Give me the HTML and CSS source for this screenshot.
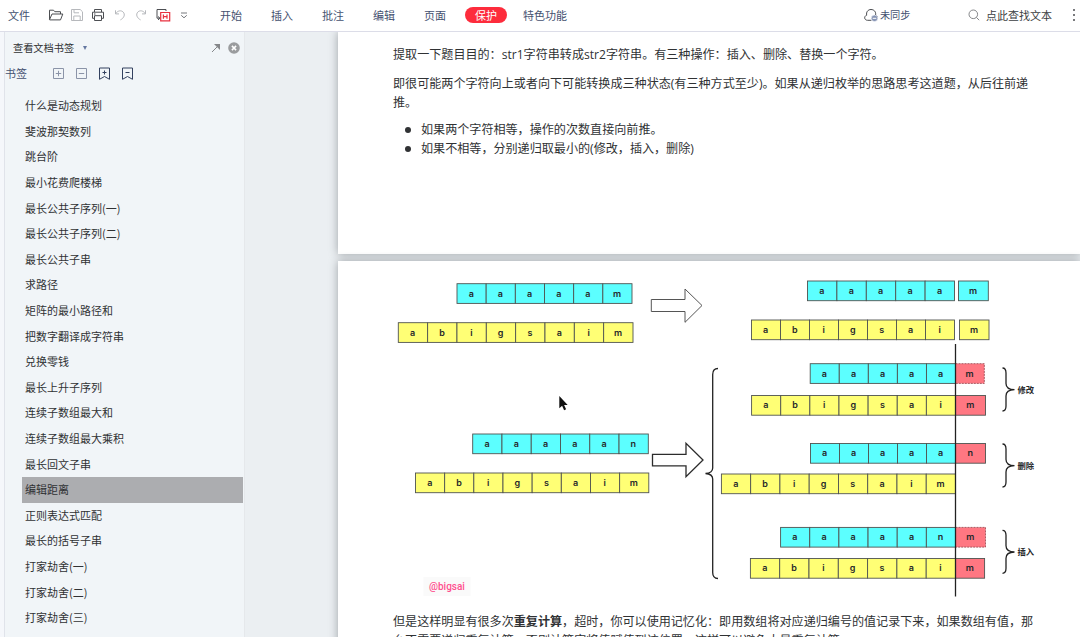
FILE: index.html
```html
<!DOCTYPE html>
<html lang="zh-CN">
<head>
    <meta charset="UTF-8">
    <meta name="viewport" content="width=device-width, initial-scale=1.0">
    <title>编辑距离</title>
    <link rel="stylesheet" href="styles.css">
</head>
<body>
    <header class="topbar">
        <span class="file-menu">文件</span>
        <div class="tools">
            <svg width="16" height="14" viewBox="0 0 16 14"><path d="M1.5 11.5V2.2h4l1.3 1.5h5.7V6M1.5 11.7 4 6h10.8l-2.3 5.9H1.7z"/></svg>
            <svg class="off" width="14" height="14" viewBox="0 0 14 14"><path d="M1.5 1.5h8.7l2.3 2.3v8.7h-11zM4 1.8v3h5M3.8 12.3V8h6.4v4.3"/></svg>
            <svg width="14" height="14" viewBox="0 0 14 14"><path d="M3.5 4V1.5h7V4M3.5 10.3h-2V4.2h11v6.1h-2M3.5 7.7h7v4.8h-7zM3 6h1.5"/></svg>
            <svg class="off" width="14" height="14" viewBox="0 0 14 14"><path d="M2.5 2.3v3.6H6M2.7 5.7C4.5 2.6 8 2 10 3.9c2.6 2.5 1 6.2-2.6 8"/></svg>
            <svg class="off" width="14" height="14" viewBox="0 0 14 14"><path d="M11.5 2.3v3.6H8M11.3 5.7C9.5 2.6 6 2 4 3.9c-2.6 2.5-1 6.2 2.6 8"/></svg>
            <svg width="16" height="14" viewBox="0 0 16 14"><path d="M11 3V1.5H2v8.7h2.5"/><path d="m3 8.5 2 1.7-2 1.7"/><path class="red" d="M5.7 4.5h9v8.3h-9zM8.4 6.5v4.2M12 6.5v4.2M8.4 8.6H12"/></svg>
            <svg class="more-tools" width="10" height="10" viewBox="0 0 10 10"><path d="M2 3h6M2.2 5.3 5 7.8l2.8-2.5"/></svg>
        </div>
        <nav class="tabs">
            <a>开始</a>
            <a>插入</a>
            <a>批注</a>
            <a>编辑</a>
            <a>页面</a>
            <a class="active"><span>保护</span></a>
            <a class="wide">特色功能</a>
        </nav>
        <div class="sync">
            <svg width="16" height="16" viewBox="0 0 16 16"><path d="M8.5 13.3H4.6C1 13.3.8 9 3.7 8.2 3 5 5 2.500 8 2.500s5.200 2.300 4.600 5.500c1.500.6 2 1.800 1.800 2.600"/><circle class="badge" cx="11.5" cy="11.3" r="3.3"/><path class="minus" d="M9.7 11.3h3.6"/></svg>
            <span>未同步</span>
        </div>
        <div class="search">
            <svg width="12" height="12" viewBox="0 0 12 12"><circle cx="5.3" cy="5.3" r="4.3"/><path d="m8.4 8.4 2.8 2.8"/></svg>
            <span>点此查找文本</span>
        </div>
        <svg class="more" width="4" height="14" viewBox="0 0 4 14"><circle cx="2" cy="2" r="1"/><circle cx="2" cy="7" r="1"/><circle cx="2" cy="12" r="1"/></svg>
    </header>

    <div class="main">
        <aside class="sidebar">
            <div class="panel-title">
                <span>查看文档书签</span>
                <i class="caret"></i>
                <svg class="popout" width="10" height="10" viewBox="0 0 10 10"><path d="M1 9 7.5 2.5"/><path class="head" d="M3 1h6v6z"/></svg>
                <svg class="close" width="12" height="12" viewBox="0 0 12 12"><circle cx="6" cy="6" r="5.8"/><path d="m3.9 3.9 4.2 4.2M8.1 3.9 3.9 8.1"/></svg>
            </div>
            <div class="panel-tools">
                <span>书签</span>
                <svg class="light" width="13" height="13" viewBox="0 0 13 13"><path d="M1.5 1.5h10v10h-10zM6.5 3.8v5.4M3.8 6.5h5.4"/></svg>
                <svg class="light" width="13" height="13" viewBox="0 0 13 13"><path d="M1.5 1.5h10v10h-10zM3.8 6.5h5.4"/></svg>
                <svg width="13" height="13" viewBox="0 0 13 13"><path d="M1.5 1h10v11.3L6.5 9.5l-5 2.8zM6.5 3.5v4M4.5 5.5h4"/></svg>
                <svg width="13" height="13" viewBox="0 0 13 13"><path d="M1.5 1h10v11.3L6.5 9.5l-5 2.8zM4.5 5.5h4"/></svg>
            </div>
            <ul class="bookmarks">
                <li>什么是动态规划</li>
                <li>斐波那契数列</li>
                <li>跳台阶</li>
                <li>最小花费爬楼梯</li>
                <li>最长公共子序列(一)</li>
                <li>最长公共子序列(二)</li>
                <li>最长公共子串</li>
                <li>求路径</li>
                <li>矩阵的最小路径和</li>
                <li>把数字翻译成字符串</li>
                <li>兑换零钱</li>
                <li>最长上升子序列</li>
                <li>连续子数组最大和</li>
                <li>连续子数组最大乘积</li>
                <li>最长回文子串</li>
                <li class="selected">编辑距离</li>
                <li>正则表达式匹配</li>
                <li>最长的括号子串</li>
                <li>打家劫舍(一)</li>
                <li>打家劫舍(二)</li>
                <li>打家劫舍(三)</li>
            </ul>
        </aside>

        <main class="viewer">
            <section class="page first">
                <p>提取一下题目目的：str1字符串转成str2字符串。有三种操作：插入、删除、替换一个字符。</p>
                <p>即很可能两个字符向上或者向下可能转换成三种状态(有三种方式至少)。如果从递归枚举的思路思考这道题，从后往前递<br>推。</p>
                <ul>
                    <li>如果两个字符相等，操作的次数直接向前推。</li>
                    <li>如果不相等，分别递归取最小的(修改，插入，删除)</li>
                </ul>
            </section>
            <section class="page second">
                <svg class="diagram" width="742" height="344" viewBox="338 261 742 344">
                    <g id="rows"></g>
                    <path class="arrow thin" d="M651.3 299.5H685V289l17 16.5-17 16.8v-10.8h-33.7z"/>
                    <path class="arrow" d="M652.5 454.3H686v-11l17 16.7-17 16.8v-11h-33.5z"/>
                    <path class="line" d="M955.5 344v252.5"/>
                    <path class="line" d="M718 368.5q-5.3 0-5.3 6V468q0 5-7.2 5.5 7.2.5 7.2 5.5v93.5q0 6 5.3 6"/>
                    <path class="line" d="M1002.5 368q3.5 0 3.5 5v10.5q0 6 8.5 6.2-8.5.2-8.5 6.2V406q0 5-3.5 5"/>
                    <path class="line" d="M1002.5 444q3.5 0 3.5 5v10.5q0 6 8.5 6.2-8.5.2-8.5 6.2V482q0 5-3.5 5"/>
                    <path class="line" d="M1002.5 530.3q3.5 0 3.5 5v10.5q0 6 8.5 6.2-8.5.2-8.5 6.2v10.1q0 5-3.5 5"/>
                    <text class="op" x="1017.5" y="393">修改</text>
                    <text class="op" x="1017.5" y="469">删除</text>
                    <text class="op" x="1017.5" y="555">插入</text>
                    <rect class="sign-bg" x="423.5" y="577" width="47" height="19"/>
                    <text class="sign" x="429" y="590.3">@bigsai</text>
                    <path class="cursor" d="M559.3 396v12.3l2.8-2.6 2 4.5 2-.9-2-4.4h3.6z"/>
                </svg>
                <p>但是这样明显有很多次<b>重复计算</b>，超时，你可以使用记忆化：即用数组将对应递归编号的值记录下来，如果数组有值，那<br>么不需要递归重复计算，否则计算完将值赋值到该位置，这样可以避免大量重复计算。</p>
            </section>
        </main>
    </div>

    <script src="diagram.js"></script>
</body>
</html>
```
FILE: styles.css
```css
* {
    box-sizing: border-box;
}
body {
    margin: 0;
    width: 1080px;
    height: 637px;
    overflow: hidden;
    font-family: "Open Sans", "Noto Sans CJK SC", sans-serif;
    font-size: 11px;
    color: #303234;
    background: #ebeff2;
    display: flex;
    flex-direction: column;
}
svg {
    display: block;
    flex: none;
    fill: none;
    stroke: #4c4e52;
    stroke-width: 1;
}
ul {
    list-style: none;
    margin: 0;
    padding: 0;
}

/* top bar */
.topbar {
    flex: none;
    height: 32px;
    padding-bottom: 1px;
    border-bottom: 1px solid #dcdde8;
    background: #fff;
    display: flex;
    align-items: center;
    color: #445170;
    line-height: 28px;
    white-space: nowrap;
    font-family: "Noto Sans CJK SC", sans-serif;
}
.file-menu {
    width: 45px;
    padding-left: 8px;
}
.tools {
    display: grid;
    grid-template-columns: repeat(7, 21.4px);
    justify-items: center;
    align-items: center;
}
.tools .off {
    stroke: #b6b8bc;
}
.tools .red {
    stroke: #e8313f;
    stroke-width: 1.2;
}
.tools .more-tools {
    stroke: #77797d;
}
.tabs {
    display: flex;
    align-items: center;
    margin-left: 10.7px;
}
.tabs a {
    width: 51px;
    text-align: center;
}
.tabs .wide {
    width: 67px;
}
.tabs .active span {
    display: block;
    width: 42px;
    height: 16px;
    margin: 0 auto;
    line-height: 16px;
    border-radius: 8px;
    background: #fd2c3c;
    color: #fff;
}
.sync {
    display: flex;
    align-items: center;
    gap: 1px;
    margin-left: 284.5px;
    font-size: 10.2px;
}
.sync .badge {
    fill: #8795b5;
    stroke: #fff;
    stroke-width: .6;
}
.sync .minus {
    stroke: #fff;
}
.search {
    display: flex;
    align-items: center;
    gap: 6px;
    margin-left: auto;
    color: #3c3e42;
}
.search svg {
    stroke: #77797d;
    stroke-width: .9;
}
.more {
    margin: 0 4px 0 20px;
    fill: #4c4e52;
    stroke: none;
}

/* bookmark panel */
.main {
    flex: 1;
    min-height: 0;
    display: flex;
}
.sidebar {
    flex: none;
    width: 244px;
    border-left: 4px solid #f5f7fb;
    background: #f1f5f8;
    box-shadow: inset 1px 0 #e0e3ea, 1px 0 #e5e8eb;
    font-family: "Noto Sans CJK SC", sans-serif;
}
.panel-title {
    display: flex;
    align-items: center;
    height: 31px;
    padding: 0 4px 0 9px;
    font-size: 10.2px;
}
.caret {
    border: 2.5px solid transparent;
    border-top: 4px solid #6477a0;
    border-bottom: 0;
    margin-left: 9px;
}
.popout {
    margin-left: auto;
    stroke: #85878a;
}
.popout .head {
    fill: #85878a;
    stroke: none;
}
.close {
    margin-left: 7px;
    fill: #9a9c9e;
    stroke: none;
}
.close path {
    stroke: #fff;
    stroke-width: 1.5;
}
.panel-tools {
    display: flex;
    align-items: center;
    gap: 10px;
    height: 21px;
    padding-left: 1px;
    color: #445170;
}
.panel-tools span {
    width: 37px;
    line-height: 18px;
    padding-bottom: 2px;
}
.panel-tools svg {
    stroke: #33415f;
}
.panel-tools .light {
    stroke: #8b94a8;
}
.bookmarks {
    padding: 9.3px 1px 0 18px;
}
.bookmarks li {
    height: 25.6px;
    line-height: 25.6px;
    padding-left: 3px;
}
.bookmarks .selected {
    background: #acadb0;
}

/* document */
.viewer {
    flex: 1;
    min-width: 0;
    overflow: hidden;
    padding-left: 94px;
}
.page {
    background: #fff;
    box-shadow: 0 0 9px #9da2a6;
    font-size: 12.09px;
    line-height: 19px;
    white-space: nowrap;
}
.page p {
    margin: 0 0 10px;
    padding-left: 55px;
}
.first {
    height: 222px;
    padding-top: 13px;
    margin-bottom: 7px;
}
.first ul {
    padding-left: 67px;
    margin-top: -2px;
}
.first li {
    display: flex;
    align-items: center;
}
.first li::before {
    content: "";
    width: 6px;
    height: 6px;
    border-radius: 50%;
    background: #303234;
    margin-right: 10px;
}
.second {
    height: 500px;
}
.second p {
    padding-top: 7px;
}

/* diagram */
.diagram text {
    stroke: none;
    fill: #26282a;
}
.diagram rect {
    stroke: #4f5350;
    stroke-width: .9;
}
.diagram .cyan {
    fill: #5cffff;
}
.diagram .yellow {
    fill: #ffff75;
}
.diagram .red {
    fill: #ff7782;
}
.diagram .dashed {
    stroke: #a05058;
    stroke-dasharray: 2 1;
}
.diagram .letter {
    font: 600 9px Inter, sans-serif;
    text-anchor: middle;
}
.diagram .arrow {
    fill: #fff;
    stroke: #2c2c2c;
    stroke-width: 1.3;
}
.diagram .thin {
    stroke: #555;
    stroke-width: 1;
}
.diagram .line {
    stroke: #222;
    stroke-width: 1.3;
}
.diagram .op {
    font: bold 8.3px "Noto Sans CJK SC", sans-serif;
}
.diagram .sign-bg {
    fill: #fafafa;
    stroke: none;
}
.diagram .sign {
    font: 500 10px Roboto, sans-serif;
    fill: #ff4f8e;
}
.diagram .cursor {
    fill: #111;
    stroke: #fff;
    stroke-width: .8;
    paint-order: stroke;
}
```
FILE: diagram.js
```javascript
// each row: left, right, top, color, letters
const rows = [
    [457, 632, 283.7, 'cyan', 'aaaaam'],
    [398.3, 633, 322.7, 'yellow', 'abigsaim'],
    [807.5, 954.5, 281, 'cyan', 'aaaaa'],
    [958.5, 988.3, 281, 'cyan', 'm'],
    [751.5, 954.5, 320, 'yellow', 'abigsai'],
    [959.5, 989, 320, 'yellow', 'm'],
    [810.2, 955.5, 363.7, 'cyan', 'aaaaa'],
    [955.5, 984.3, 363.7, 'red dashed', 'm'],
    [751.6, 955.5, 395.5, 'yellow', 'abigsai'],
    [955.5, 985.5, 395.5, 'red', 'm'],
    [472.7, 648.3, 434, 'cyan', 'aaaaan'],
    [415.5, 648.8, 473, 'yellow', 'abigsaim'],
    [810.5, 955.5, 443.5, 'cyan', 'aaaaa'],
    [955.5, 985.5, 443.5, 'red', 'n'],
    [721.4, 955.5, 474, 'yellow', 'abigsaim'],
    [780.6, 955.5, 527.4, 'cyan', 'aaaaan'],
    [955.5, 985.5, 527.4, 'red dashed', 'm'],
    [750.4, 955.5, 558.5, 'yellow', 'abigsai'],
    [955.5, 984.6, 558.5, 'red', 'm']
];

const group = document.getElementById('rows');

function add(tag, attrs) {
    const el = document.createElementNS('http://www.w3.org/2000/svg', tag);
    Object.keys(attrs).forEach(key => el.setAttribute(key, attrs[key]));
    group.appendChild(el);
    return el;
}

rows.forEach(([left, right, top, color, letters]) => {
    const width = (right - left) / letters.length;
    [...letters].forEach((letter, i) => {
        const x = left + i * width;
        add('rect', { class: color, x: x, y: top, width: width, height: 19.7 });
        add('text', { class: 'letter', x: x + width / 2 - 0.3, y: top + 12.9 }).textContent = letter;
    });
});
```
